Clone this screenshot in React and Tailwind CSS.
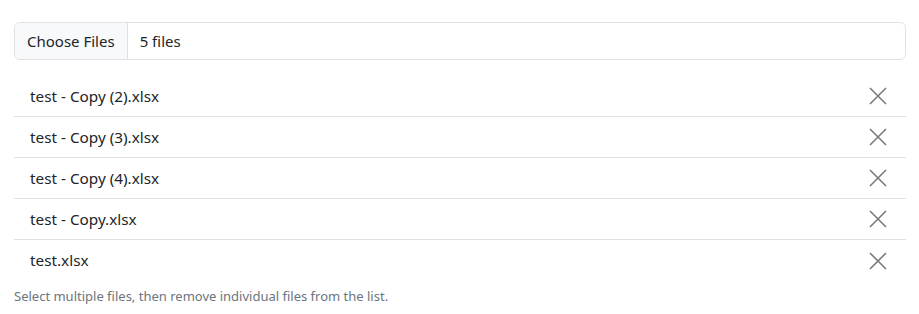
import React, { useState } from 'react';

const initialFiles = [
  'test - Copy (2).xlsx',
  'test - Copy (3).xlsx',
  'test - Copy (4).xlsx',
  'test - Copy.xlsx',
  'test.xlsx',
];

const CloseIcon = () => (
  <svg width="18" height="18" viewBox="0 0 18 18" fill="none" stroke="currentColor" strokeWidth="1.6">
    <path d="M1 1L17 17M17 1L1 17" />
  </svg>
);

const App = () => {
  const [files, setFiles] = useState(initialFiles);

  return (
    <div className="px-[14px] pt-[22px] text-[#212529]" style={{ fontFamily: '"Noto Sans", "Open Sans", sans-serif' }}>
      {/* File input */}
      <div className="flex h-[38px] w-[892px] items-stretch rounded-md border border-[#dee2e6] text-[15px]">
        <button className="rounded-l-md border-r border-[#dee2e6] bg-[#f8f9fa] px-3 text-[#212529]">Choose Files</button>
        <span className="flex items-center pl-3">{files.length} files</span>
      </div>

      {/* File list */}
      <ul className="mt-[16px] w-[892px]">
        {files.map((name, i) => (
          <li
            key={name}
            className={`flex h-[41px] items-center justify-between pl-4 pr-[19px] text-[15.3px] ${i < files.length - 1 ? 'border-b border-[#dee2e6]' : ''}`}
          >
            <span>{name}</span>
            <button onClick={() => setFiles(files.filter(f => f !== name))} className="text-[#7a7a7a]">
              <CloseIcon />
            </button>
          </li>
        ))}
      </ul>

      <p className="mt-[6px] text-[13px] text-[#6c757d]">Select multiple files, then remove individual files from the list.</p>
    </div>
  );
};

export default App;
